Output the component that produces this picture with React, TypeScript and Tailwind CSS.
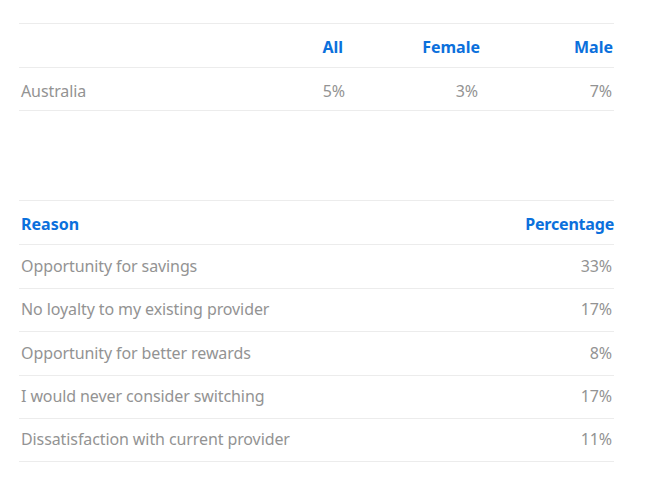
const byGender = [{ label: "Australia", all: "5%", female: "3%", male: "7%" }];

const reasons = [
  { reason: "Opportunity for savings", pct: "33%", h: "h-[44px]" },
  { reason: "No loyalty to my existing provider", pct: "17%", h: "h-[43px]" },
  { reason: "Opportunity for better rewards", pct: "8%", h: "h-[44px]" },
  { reason: "I would never consider switching", pct: "17%", h: "h-[43px]" },
  { reason: "Dissatisfaction with current provider", pct: "11%", h: "h-[43px]" },
];

const font = { fontFamily: '"Noto Sans", "Open Sans", Arial, sans-serif' };

export default function App() {
  return (
    <div className="min-h-[494px] bg-white pt-[23px] pl-[19px]" style={font}>
      <div className="w-[595px]">
        {/* Gender split */}
        <div className="border-t border-[#ececec]">
          <div className="flex h-[44px] items-center border-b border-[#ececec] pt-[3px] text-[16px] font-bold text-[#0b70dc]">
            <div className="flex-1" />
            <div className="w-[135px] pr-[2px] text-right">All</div>
            <div className="w-[135px] text-right">Female</div>
            <div className="w-[134px] pr-[1px] text-right">Male</div>
          </div>
          {byGender.map((r) => (
            <div key={r.label} className="flex h-[43px] items-center border-b border-[#ececec] pt-[3px] text-[16px] tracking-[-0.1px] text-[#939393]">
              <div className="flex-1 pl-[2px]">{r.label}</div>
              <div className="w-[135px] text-right">{r.all}</div>
              <div className="w-[135px] pr-[2px] text-right">{r.female}</div>
              <div className="w-[134px] pr-[2px] text-right">{r.male}</div>
            </div>
          ))}
        </div>

        {/* Reasons */}
        <div className="mt-[89px] border-t border-[#ececec]">
          <div className="flex h-[44px] items-center border-b border-[#ececec] pt-[3px] text-[16px] font-bold text-[#0b70dc]">
            <div className="flex-1 pl-[2px]">Reason</div>
            <div className="text-right tracking-[-0.2px]">Percentage</div>
          </div>
          {reasons.map((r) => (
            <div key={r.reason} className={`flex ${r.h} items-center border-b border-[#ececec] pb-[2px] text-[16px] tracking-[-0.1px] text-[#939393]`}>
              <div className="flex-1 pl-[2px]">{r.reason}</div>
              <div className="pr-[2px] text-right">{r.pct}</div>
            </div>
          ))}
        </div>
      </div>
    </div>
  );
}
